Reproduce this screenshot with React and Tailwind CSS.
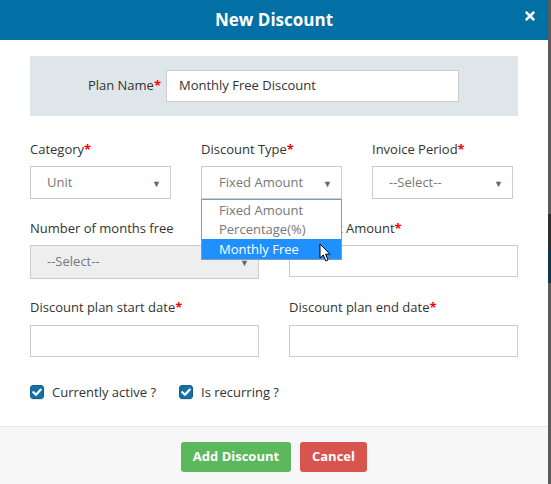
import React from "react";
import { FaTimes } from "react-icons/fa";

const Req = () => <span className="text-[#ff0000] font-bold">*</span>;

const Arrow = () => (
  <span className="absolute right-[9px] top-1/2 -translate-y-1/2 text-[9px] text-[#666] leading-none">▼</span>
);

function Select({ value, disabled, className = "" }) {
  return (
    <div
      className={
        "relative h-[33px] border border-[#cccccc] flex items-center pl-[16px] text-[13px] text-[#777] " +
        (disabled ? "bg-[#eeeeee] " : "bg-white ") +
        className
      }
    >
      {value}
      <Arrow />
    </div>
  );
}

const Input = ({ className = "" }) => (
  <div className={"h-[32px] border border-[#cccccc] bg-white " + className} />
);

const Check = () => (
  <svg width="14" height="15" viewBox="0 0 14 15">
    <rect x="0.5" y="0.5" width="13" height="13" rx="2.5" fill="#1670a6" stroke="#0f5f8f" />
    <path d="M3.3 7.2 L6 9.8 L10.8 4.6" stroke="white" strokeWidth="2.2" fill="none" strokeLinecap="round" strokeLinejoin="round" />
    <rect x="1" y="14" width="12" height="1" fill="#e6e6e6" />
  </svg>
);

const Cursor = () => (
  <svg width="14" height="20" viewBox="0 0 14 20">
    <path d="M1 1 L1 15 L4.3 12 L6.8 18 L9 17 L6.6 11.2 L11 11.2 Z" fill="white" stroke="black" strokeWidth="1" strokeLinejoin="round" />
  </svg>
);

export default function App() {
  return (
    <div className="flex w-[551px] h-[484px] overflow-hidden" style={{ fontFamily: '"Open Sans", "Noto Sans", sans-serif' }}>
      <div className="w-[548px] h-full flex flex-col bg-white">
        <div className="relative h-[40px] shrink-0 bg-[#0270a4] flex items-center justify-center">
          <span className="text-white text-[17px] font-bold">New Discount</span>
          <FaTimes className="absolute right-[11px] top-[9px] text-white text-[14px]" />
        </div>
        <div className="flex-1 px-[30px] pt-[16px]">
          <div className="h-[60px] bg-[#dfe6e9] flex items-center">
            <div className="w-[131px] text-right text-[13px] text-[#333]">
              Plan Name<Req />
            </div>
            <div className="ml-[5px] w-[293px] h-[32px] border border-[#cccccc] bg-white flex items-center pl-[12px] text-[13px] text-[#333]">
              Monthly Free Discount
            </div>
          </div>

          <div className="mt-[24px] grid grid-cols-[141px_141px_141px] gap-x-[30px]">
            <div>
              <div className="text-[13px] text-[#333] leading-[18px]">Category<Req /></div>
              <Select value="Unit" className="mt-[8px]" />
            </div>
            <div className="relative">
              <div className="text-[13px] text-[#333] leading-[18px]">Discount Type<Req /></div>
              <Select value="Fixed Amount" className="mt-[8px] pl-[17px]" />
              <div className="absolute left-0 top-[59px] z-10 w-[141px] border border-[#7f9db9] bg-white text-[13px] leading-[19px] pt-[1px]">
                <div className="pl-[17px] text-[#777]">Fixed Amount</div>
                <div className="pl-[17px] text-[#777]">Percentage(%)</div>
                <div className="pl-[17px] bg-[#1e90ff] text-white h-[20px] leading-[20px]">Monthly Free</div>
                <div className="absolute left-[117px] top-[43px]"><Cursor /></div>
              </div>
            </div>
            <div>
              <div className="text-[13px] text-[#333] leading-[18px]">Invoice Period<Req /></div>
              <Select value="--Select--" className="mt-[8px]" />
            </div>
          </div>

          <div className="mt-[20px] grid grid-cols-[229px_229px] gap-x-[30px]">
            <div>
              <div className="text-[13px] text-[#333] leading-[18px]">Number of months free</div>
              <Select value="--Select--" disabled className="mt-[8px] h-[34px]" />
            </div>
            <div>
              <div className="text-[13px] text-[#333] leading-[18px]">Discount Amount<Req /></div>
              <Input className="mt-[8px] h-[32px]" />
            </div>
          </div>

          <div className="mt-[19px] grid grid-cols-[229px_229px] gap-x-[30px]">
            <div>
              <div className="text-[13px] text-[#333] leading-[18px]">Discount plan start date<Req /></div>
              <Input className="mt-[9px]" />
            </div>
            <div>
              <div className="text-[13px] text-[#333] leading-[18px]">Discount plan end date<Req /></div>
              <Input className="mt-[9px]" />
            </div>
          </div>

          <div className="mt-[26px] flex items-center text-[13px] text-[#333] leading-[18px]">
            <Check />
            <span className="ml-[8px]">Currently active ?</span>
            <span className="ml-[23px] flex"><Check /></span>
            <span className="ml-[8px]">Is recurring ?</span>
          </div>
        </div>
        <div className="h-[58px] shrink-0 border-t border-[#e5e5e5] bg-[#f7f7f7] flex justify-center pt-[15px] gap-[9px]">
          <div className="h-[30px] w-[110px] rounded-[3px] bg-[#5cb85c] text-white text-[13px] font-bold flex items-center justify-center">
            Add Discount
          </div>
          <div className="h-[30px] w-[67px] rounded-[3px] bg-[#d9534f] text-white text-[13px] font-bold flex items-center justify-center">
            Cancel
          </div>
        </div>
      </div>
      <div className="w-[3px] h-full flex flex-col bg-[#5b5b5b]">
        <div className="h-[214px]" />
        <div className="h-[35px] bg-[#2d2d2d]" />
        <div className="h-[34px] bg-[#0e3549]" />
      </div>
    </div>
  );
}
